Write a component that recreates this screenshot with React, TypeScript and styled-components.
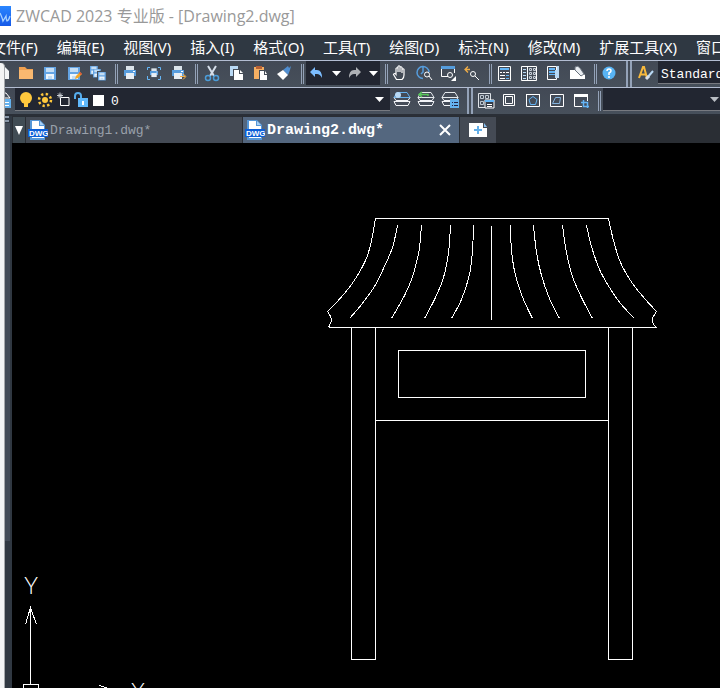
import React from "react";
import styled, { createGlobalStyle } from "styled-components";

const uiFont = '"Noto Sans", "Noto Sans CJK SC", sans-serif';
const monoFont = '"Liberation Mono", "Noto Sans CJK SC", monospace';

const GlobalStyle = createGlobalStyle`
  * { box-sizing: border-box; }
  body { margin: 0; background: #000; overflow: hidden; }
  button, select { font: inherit; color: inherit; border: 0; padding: 0; margin: 0; background: none; }
`;

const Shell = styled.div`
  position: relative;
  display: flex;
  flex-direction: column;
  min-height: 100vh;
  overflow: hidden;
  font-family: ${uiFont};
  background: #2d333c;
`;

const TitleBar = styled.header`
  display: flex;
  align-items: center;
  gap: 5px;
  height: 35px;
  padding-bottom: 3px;
  background: #fff;
  color: #999;
  white-space: nowrap;
`;

const Title = styled.h1`
  margin: 0;
  font-size: 16px;
  font-weight: 400;
  line-height: 24px;
  font-family: "Open Sans", "Noto Sans CJK SC", sans-serif;
`;

const MenuBar = styled.nav`
  display: flex;
  gap: 19px;
  height: 25px;
  margin-left: -9px;
  padding-bottom: 2px;
  background: #2f3842;
  color: #fff;
  font-size: 15px;
`;

const MenuItem = styled.button`
  flex: none;
  white-space: nowrap;
`;

const Toolbar = styled.div`
  display: flex;
  align-items: flex-start;
  height: ${(p: { $height: number }) => p.$height}px;
  border-top: 1px solid #b3bdd2;
  background: linear-gradient(#424955, #47505b);
  overflow: hidden;
`;

const PropertyBar = styled(Toolbar)`
  border-bottom: 2px solid #2a2f37;
`;

const ToolButton = styled.button<{ $clip?: number }>`
  flex: none;
  width: 24px;
  height: 24px;
  margin-left: ${(p) => -(p.$clip ?? 0)}px;
  svg { display: block; }
`;

const Divider = styled.span<{ $after?: number; $thick?: boolean }>`
  flex: none;
  align-self: ${(p) => (p.$thick ? "stretch" : "center")};
  width: ${(p) => (p.$thick ? 6 : 3)}px;
  height: ${(p) => (p.$thick ? "auto" : "20px")};
  margin-left: 5px;
  margin-right: ${(p) => p.$after ?? 0}px;
  border: solid #94a2b8;
  border-width: ${(p) => (p.$thick ? "0 2px" : "0 1px")};
`;

const History = styled.div`
  flex: none;
  display: flex;
  align-items: center;
  width: 74px;
  height: 24px;
  background: #222631;
`;

const CaretButton = styled.button`
  flex: none;
  display: flex;
  justify-content: center;
  width: 13px;
`;

const Combo = styled.label<{ $width: number }>`
  flex: none;
  display: flex;
  align-items: center;
  gap: 3px;
  width: ${(p) => p.$width}px;
  height: 23px;
  padding: 0 6px 0 3px;
  background: #222631;
  border-bottom: 1px solid #777a80;
  color: #fff;
`;

const Picker = styled.select`
  appearance: none;
  flex: 1;
  min-width: 0;
  height: 22px;
  padding-top: 4px;
  outline: none;
  font-family: ${monoFont};
  font-size: 13px;
`;

const Body = styled.div`
  flex: 1;
  display: flex;
`;

const Rail = styled.aside`
  flex: none;
  width: 12px;
  padding-left: 5px;
  background: #303842;
`;

const Grip = styled.div`
  width: 4px;
  height: 6px;
  border: solid #8997a8;
  border-width: 2px 0;
`;

const RailPanel = styled.div`
  width: 5px;
  height: 418px;
  margin-top: 1px;
  background: #424b57;
`;

const Workspace = styled.main`
  flex: 1;
  min-width: 0;
  display: flex;
  flex-direction: column;
`;

const TabStrip = styled.div`
  flex: none;
  display: flex;
  gap: 1px;
  height: 27px;
  padding: 1px 0 0 1px;
  background: #2a2e34;
`;

const TabList = styled.button`
  flex: none;
  display: flex;
  align-items: center;
  justify-content: center;
  width: 12px;
  background: #414c54;
`;

const Tab = styled.div<{ $active?: boolean }>`
  flex: none;
  display: flex;
  align-items: center;
  width: 216px;
  padding: 0 8px 0 2px;
  background: ${(p) => (p.$active ? "#54677f" : "#444a54")};
  color: ${(p) => (p.$active ? "#fff" : "#99a0aa")};
  font-family: ${monoFont};
  font-size: ${(p) => (p.$active ? 15 : 13)}px;
  font-weight: ${(p) => (p.$active ? 700 : 400)};
`;

const TabName = styled.button`
  flex: 1;
  display: flex;
  align-items: center;
  gap: 2px;
  text-align: left;
  font-weight: inherit;
`;

const IconButton = styled.button`
  flex: none;
  display: flex;
`;

const NewTab = styled.button`
  flex: none;
  display: flex;
  align-items: center;
  justify-content: center;
  width: 36px;
  background: #444a54;
`;

const Canvas = styled.div`
  flex: 1;
  display: flex;
  background: #000;
`;

const Drawing = styled.svg`
  flex: 1;
  min-width: 0;
  display: block;
  overflow: hidden;
`;

const BehindWindow = styled.div`
  position: absolute;
  left: 0;
  top: 63px;
  bottom: 0;
  width: 5px;
  background: #f3f4f5;
  border-right: 1px solid #a4a7ab;
  border-top-right-radius: 4px;
`;

const blue = "#64b5f6";
const sky = "#b9d9f5";
const wh = "#fff";

const floppy = (x: number, y: number, s: number) => (
  <g transform={`translate(${x} ${y}) scale(${s})`}>
    <path d="M0 0h12v13H0z" fill="#64a4e4" />
    <path d="M2 1h8v4H2z" fill="#c4ddf4" />
    <path d="M2 7h8v5H2z" fill="#eef5fb" />
    <path d="M4 9h4v3H4z" fill="#c4ddf4" />
  </g>
);

const printer = (
  <g>
    <path d="M8 5h8v4H8z" fill="#dbe3ea" />
    <path d="M6 9h12v6H6z" fill="#589dde" />
    <path d="M8 12h8v6H8z" fill="#e8eef4" />
    <path d="M15 10h2v1h-2z" fill={wh} />
  </g>
);

const layers = (top: string) => (
  <g fill="none" strokeWidth="1">
    <path d="M7 4.500h10l3 5H4z" stroke={top} />
    <path d="M4 9.500l2 3h12l2-3M4 13.500h16M4 13.500l2 4h12l2-4" stroke="#f1f3f6" />
  </g>
);

const art: Record<string, React.ReactNode> = {
  newFile: <path d="M8 6h7l4 4v8H8z" fill="#f3f5f7" />,
  open: (
    <g>
      <path d="M5 6h6l2 2h6v10H5z" fill="#f0a050" />
      <path d="M5 9h14v9H5z" fill="#f9b870" />
    </g>
  ),
  save: floppy(6, 6, 1),
  saveAs: (
    <g>
      {floppy(6, 6, 1)}
      <path d="M13 18l1-3 4-4 2 2-4 4z" fill="#f5a623" />
      <path d="M17 12l1-1 2 2-1 1z" fill="#d85040" />
    </g>
  ),
  saveAll: (
    <g>
      {floppy(4, 5, 0.65)}
      {floppy(7, 8, 0.65)}
      <path d="M11 10h9v10h-9z" fill="#444c57" />
      {floppy(12, 11, 0.65)}
    </g>
  ),
  print: printer,
  preview: (
    <g>
      <g transform="translate(4 4) scale(.67)">{printer}</g>
      <path d="M5.500 9V6.500H8M16 6.500h2.500V9M5.500 15v3.500H8M16 18.500h2.500V15" fill="none" stroke={blue} />
    </g>
  ),
  publish: (
    <g>
      {printer}
      <path d="M14 15.500h5M17 13l3 2.500-3 3" fill="none" stroke="#f5ae45" />
    </g>
  ),
  cut: (
    <g fill="none">
      <path d="M8 5l6 10M16 5l-6 10" stroke="#d5deea" strokeWidth="2" />
      <circle cx="8" cy="17" r="2.500" stroke="#4b9cd8" strokeWidth="1.500" />
      <circle cx="16" cy="17" r="2.500" stroke="#4b9cd8" strokeWidth="1.500" />
    </g>
  ),
  copy: (
    <g>
      <path d="M6 5h8v10H6z" fill={sky} />
      <path d="M9 8h6l4 4v8H9z" fill="#444c57" />
      <path d="M10 9h5v4h4v6h-9z" fill={wh} />
      <path d="M16 9l3 3h-3z" fill={wh} />
    </g>
  ),
  paste: (
    <g>
      <path d="M6 6h10v12H6z" fill="#f5af62" />
      <path d="M8 5h6v3H8z" fill="#b66136" />
      <path d="M11 9h8v10h-8z" fill="#444c57" />
      <path d="M12 10h4v4h3v5h-7z" fill={wh} />
      <path d="M17 10l2 3h-2z" fill={wh} />
    </g>
  ),
  match: (
    <g>
      <path d="M11 9l5-4 1 2 2-2-1 4-2 5z" fill="#508ed0" />
      <path d="M5 13l6-4 5 5-5 5z" fill={wh} />
    </g>
  ),
  undo: <path d="M4 11l5-5v3h2q5 0 5 8q-2-4-5-4H9v3z" fill="#7cbdff" />,
  redo: <path d="M18 11l-5-5v3h-2q-5 0-5 8q2-4 5-4h2v3z" fill="#aeb1b5" />,
  pan: (
    <path
      d="M8.500 18.500l-3-5q1-2 2.500 0V7.500q1-1.500 2 0V11V5.500q1-1.500 2 0V11V6.500q1-1.500 2 0V12V8.500q1.500-1.500 2 0V14q0 3-2 4.500z"
      fill="#444c57"
      stroke={wh}
      strokeWidth="1.200"
    />
  ),
  zoomRealtime: (
    <g fill="none">
      <path d="M11 17.500a6 6 0 1 1 6-6.500M11 6v5l-2 2" stroke="#559cdc" strokeWidth="1.500" />
      <circle cx="15" cy="13.500" r="2.500" stroke={wh} />
      <path d="M17 15l3 4" stroke={wh} />
    </g>
  ),
  zoomWindow: (
    <g fill="none">
      <path d="M5.500 7v8.500H12M18.500 7v5" stroke={wh} />
      <path d="M5 5h14v3H5z" fill="#559cdc" />
      <circle cx="14" cy="14" r="2.500" stroke={wh} />
      <path d="M20 15v5h-5z" fill={wh} />
    </g>
  ),
  zoomPrevious: (
    <g fill="none">
      <path d="M5 8.500h5M8 5.500l-3 3 3 3" stroke="#efad48" strokeWidth="1.300" />
      <circle cx="13" cy="13" r="2.500" stroke={wh} />
      <path d="M15 15l4 4" stroke={wh} />
    </g>
  ),
  properties: (
    <g>
      <path d="M5.500 5.500h12v14h-12z" fill="none" stroke={wh} />
      <path d="M7 7h9v2H7zM13 14h3v1h-3zM13 17h3v1h-3z" fill={blue} />
      <path d="M7 11h2v1H7zM10 11h2v1h-2zM13 11h3v1h-3zM7 14h5v1H7zM7 17h5v1H7z" fill={wh} />
    </g>
  ),
  designCenter: (
    <g fill="none" stroke={wh}>
      <path d="M4.500 5.500h15v14h-15zM10.500 5v15" />
      <path d="M6 8.500h3M6 11.500h3M6 14.500h3M6 17.500h3" stroke={sky} />
      <path d="M12.500 7.500h2v2h-2zM16.500 7.500h2v2h-2zM12.500 11.500h2v2h-2zM16.500 11.500h2v2h-2zM12.500 15.500h2v2h-2zM16.500 15.500h2v2h-2z" stroke="#c6ced8" />
    </g>
  ),
  palettes: (
    <g>
      <path d="M6.500 5.500h9v13h-9z" fill="none" stroke={wh} />
      <path d="M16 5h2v4h-2zM14 9h4v8h-4z" fill={sky} />
      <path d="M8 7h6v2H8zM8 10h6v2H8zM8 13h6v1H8z" fill={blue} />
    </g>
  ),
  eraser: (
    <g>
      <path d="M5 9h8l7 5v4H5z" fill={wh} />
      <path d="M10 6q3-2 5 1l4 6-3 2-6-6z" fill="#e9edf1" stroke="#68717c" />
    </g>
  ),
  help: (
    <g>
      <circle cx="12" cy="12" r="6.500" fill="#58b4f5" />
      <path d="M10 10q0-2 2-2t2 2q0 1-2 2v2M12 15v2" stroke={wh} fill="none" strokeWidth="1.500" />
    </g>
  ),
  textStyle: (
    <g fill="none">
      <path d="M5 17L9 6h1l3 11M6 13.500h6" stroke="#f8b93c" strokeWidth="2" />
      <path d="M13 17l6-7" stroke={sky} strokeWidth="2" />
      <path d="M12 18l3-3" stroke="#d8dfe8" strokeWidth="3" />
    </g>
  ),
  layerManager: (
    <g>
      <path d="M8 5h7l4 5H6z" fill="none" stroke={wh} />
      <path d="M10 11h10v9H10z" fill="#64b1ee" />
      <path d="M12 14.500h6M12 17.500h6" stroke={wh} />
    </g>
  ),
  layerCurrent: (
    <g>
      {layers("#65b1ef")}
      <circle cx="8" cy="7" r="3" fill="#b8d9f5" />
    </g>
  ),
  layerPrevious: (
    <g>
      {layers("#e5e9ed")}
      <path d="M14 8V6.500H5M8 4L5 6.500 8 9" fill="none" stroke="#59c85a" strokeWidth="1.500" />
    </g>
  ),
  layerStates: (
    <g>
      {layers("#e5e9ed")}
      <path d="M12 11h9v9h-9z" fill="#64b1ee" />
      <path d="M14 14.500h1M16 14.500h4M14 17.500h1M16 17.500h4" stroke="#224" />
    </g>
  ),
  viewports: (
    <g fill="none" stroke={wh}>
      <path d="M5.500 5.500h12v14h-12z" stroke="#dfe3e8" />
      <path d="M7.500 7.500h3v3h-3zM12.500 7.500h3v3h-3zM7.500 13.500h3v3h-3z" stroke="#bec7d0" />
      <path d="M12 12h9v8h-9z" fill="#343b46" stroke={wh} />
      <path d="M12 12h9v2h-9z" fill={blue} stroke="none" />
      <path d="M14 16.500h5M14 18.500h5" />
    </g>
  ),
  singleView: <path d="M6.500 6.500h11v11h-11zM8.500 8.500h7v7h-7z" fill="none" stroke={wh} />,
  polygonView: (
    <g fill="none">
      <path d="M5.500 6.500h13v12h-13z" stroke={wh} />
      <path d="M5 6h14v1H5z" fill={wh} />
      <path d="M12 8.500l4 3-1.500 5h-5L8 11.500z" stroke={blue} />
    </g>
  ),
  objectView: (
    <g fill="none">
      <path d="M5.500 6.500h13v12h-13z" stroke={wh} />
      <path d="M10.500 9.500h5l-1 6h-7z" stroke="#85b4df" />
    </g>
  ),
  clipView: (
    <g fill="none">
      <path d="M13 18.500H5.500v-11h13V13" stroke={wh} />
      <path d="M5 6h14v3H5z" fill={wh} />
      <path d="M14.500 12v6.500H20M12 14.500h6.500V20" stroke={blue} strokeWidth="1.500" />
    </g>
  ),
};

type ToolName = keyof typeof art;

function Tool({ name, label, clip }: { name: ToolName; label: string; clip?: number }) {
  return (
    <ToolButton type="button" aria-label={label} title={label} $clip={clip}>
      <svg width="24" height="24" viewBox="0 0 24 24">{art[name]}</svg>
    </ToolButton>
  );
}

function Caret({ muted }: { muted?: boolean }) {
  return (
    <svg width="9" height="5" viewBox="0 0 9 5">
      <path d="M0 0h9L4.500 5z" fill={muted ? "#babec4" : "#fff"} />
    </svg>
  );
}

function AppLogo() {
  return (
    <svg width="11" height="20" viewBox="0 0 11 20">
      <defs>
        <linearGradient id="logo" x1="0" x2="0" y1="0" y2="1">
          <stop offset="0" stopColor="#2a86ff" />
          <stop offset="1" stopColor="#1559e8" />
        </linearGradient>
      </defs>
      <path d="M0 0h11v20H0z" fill="url(#logo)" />
      <path d="M0 7q2 4 3 8l3-5q0 3 1 5 2-1 3-5" fill="none" stroke="#a9d3ff" strokeWidth="1.300" />
    </svg>
  );
}

function DwgIcon() {
  return (
    <svg width="20" height="20" viewBox="0 0 20 20">
      <path d="M2 0h10l5 5v15H2z" fill="#5596d6" />
      <path d="M4 1h7v5h5v12H4z" fill="#fff" />
      <path d="M12 1l4 4h-4z" fill="#a9d0f4" />
      <path d="M0 9h20v8H0z" fill="#0b5ed7" />
      <text x="1" y="16" fontFamily="Liberation Sans" fontWeight="700" fontSize="8" fill="#fff">DWG</text>
    </svg>
  );
}

function LayerSymbols() {
  return (
    <svg width="90" height="20" viewBox="0 0 90 20">
      <circle cx="8" cy="9" r="6" fill="#ffc83d" />
      <path d="M6 14h4v4H6z" fill="#ffc83d" />
      <circle cx="27" cy="11" r="3" fill="#ffc83d" />
      <circle cx="27" cy="11" r="6" fill="none" stroke="#ffc83d" strokeWidth="2.500" strokeDasharray="2.300 2.412" />
      <path d="M42.500 8.500H51v8h-8.500z" fill="none" stroke="#fff" />
      <path d="M39 6.500h6M42 3.500v6M40 4.500l4 4M44 4.500l-4 4" stroke="#c8ccd1" />
      <path d="M57 10V7q0-3 3-3t3 3v4" fill="none" stroke="#55acec" strokeWidth="2" />
      <path d="M60 9h10v9H60z" fill="#60b8fb" />
      <path d="M64 12h2v4h-2z" fill="#fff" />
      <path d="M75 6h11v11H75z" fill="#fff" />
    </svg>
  );
}

type Point = [number, number];

/* Smooth cubic path that passes through every given point. */
function spline(points: Point[]) {
  const at = (i: number) => points[Math.max(0, Math.min(points.length - 1, i))];
  let d = `M${points[0].join(" ")}`;
  for (let i = 0; i < points.length - 1; i++) {
    const [a, b, c, e] = [at(i - 1), at(i), at(i + 1), at(i + 2)];
    d += `C${b[0] + (c[0] - a[0]) / 6} ${b[1] + (c[1] - a[1]) / 6} ${c[0] - (e[0] - b[0]) / 6} ${c[1] - (e[1] - b[1]) / 6} ${c[0]} ${c[1]}`;
  }
  return d;
}

const roofCurves: Point[][] = [
  [[375, 218], [371, 240], [365, 260], [351, 284], [335, 303], [327, 311]],
  [[327, 311], [330, 316], [331, 320], [328, 327]],
  [[397, 225], [392, 247], [383, 268], [374, 286], [361, 304], [349, 318]],
  [[421, 225], [419, 247], [416, 262], [411, 279], [404, 295], [391, 318]],
  [[450, 225], [448, 252], [443, 277], [435, 297], [424, 318]],
  [[473, 225], [472, 250], [469, 274], [461, 299], [451, 318]],
  [[491, 225], [491, 319]],
  [[510, 225], [511, 250], [515, 275], [523, 299], [532, 318]],
  [[533, 225], [536, 252], [541, 275], [549, 298], [559, 318]],
  [[562, 225], [566, 252], [572, 276], [581, 297], [592, 318]],
  [[586, 225], [591, 246], [599, 269], [609, 287], [620, 303], [634, 318]],
  [[608, 218], [613, 240], [620, 262], [632, 283], [645, 299], [656, 311]],
  [[656, 311], [652, 318], [653, 324], [656, 327]],
];

function Gateway() {
  return (
    <Drawing role="img" aria-label="Gateway elevation">
      <g transform="translate(-11.500 -142.500)" fill="none" stroke="#fff" shapeRendering="crispEdges">
        {roofCurves.map((points) => (
          <path key={points.join()} d={spline(points)} />
        ))}
        <path d="M375 218H608M328 327H656" />
        <path d="M351 327V659H375V327M608 327V659H632V327M375 420H608" />
        <rect x="398" y="350" width="187" height="47" />
        <path d="M30 684V607M25 624L30 607L36 624M23 690V684H38V690M99 685L108 688" />
      </g>
      <g transform="translate(-12 -143)" fill="#fff" fontFamily="Lato" fontWeight="300" fontSize="23">
        <text x="31" y="594" textAnchor="middle">Y</text>
        <text x="138" y="700" textAnchor="middle">X</text>
      </g>
    </Drawing>
  );
}

const menus = ["文件(F)", "编辑(E)", "视图(V)", "插入(I)", "格式(O)", "工具(T)", "绘图(D)", "标注(N)", "修改(M)", "扩展工具(X)", "窗口(W)"];

export default function App() {
  return (
    <Shell>
      <GlobalStyle />
      <TitleBar>
        <AppLogo />
        <Title>ZWCAD 2023 专业版 - [Drawing2.dwg]</Title>
      </TitleBar>
      <MenuBar>
        {menus.map((menu) => (
          <MenuItem key={menu} type="button">{menu}</MenuItem>
        ))}
      </MenuBar>
      <Toolbar $height={27}>
        <Tool name="newFile" label="新建" clip={10} />
        <Tool name="open" label="打开" />
        <Tool name="save" label="保存" />
        <Tool name="saveAs" label="另存为" />
        <Tool name="saveAll" label="全部保存" />
        <Divider />
        <Tool name="print" label="打印" />
        <Tool name="preview" label="打印预览" />
        <Tool name="publish" label="发布" />
        <Divider $after={2} />
        <Tool name="cut" label="剪切" />
        <Tool name="copy" label="复制" />
        <Tool name="paste" label="粘贴" />
        <Tool name="match" label="特性匹配" />
        <Divider $after={2} />
        <History>
          <Tool name="undo" label="放弃" />
          <CaretButton type="button" aria-label="放弃列表"><Caret /></CaretButton>
          <Tool name="redo" label="重做" />
          <CaretButton type="button" aria-label="重做列表"><Caret /></CaretButton>
        </History>
        <Divider />
        <Tool name="pan" label="平移" />
        <Tool name="zoomRealtime" label="实时缩放" />
        <Tool name="zoomWindow" label="窗口缩放" />
        <Tool name="zoomPrevious" label="缩放上一个" />
        <Divider $after={1} />
        <Tool name="properties" label="特性" />
        <Tool name="designCenter" label="设计中心" />
        <Tool name="palettes" label="工具选项板" />
        <Tool name="eraser" label="清理" />
        <Divider />
        <Tool name="help" label="帮助" />
        <Divider $thick $after={2} />
        <Tool name="textStyle" label="文字样式" />
        <Combo $width={160}>
          <Picker aria-label="文字样式" defaultValue="Standard"><option>Standard</option></Picker>
          <Caret />
        </Combo>
      </Toolbar>
      <PropertyBar $height={29}>
        <Tool name="layerManager" label="图层特性管理器" clip={9} />
        <Combo $width={375}>
          <LayerSymbols />
          <Picker aria-label="图层" defaultValue="0"><option>0</option></Picker>
          <Caret />
        </Combo>
        <Tool name="layerCurrent" label="置为当前图层" />
        <Tool name="layerPrevious" label="上一个图层" />
        <Tool name="layerStates" label="图层状态" />
        <Divider $thick />
        <Tool name="viewports" label="视口" />
        <Tool name="singleView" label="单个视口" />
        <Tool name="polygonView" label="多边形视口" />
        <Tool name="objectView" label="对象视口" />
        <Tool name="clipView" label="裁剪视口" />
        <Divider $after={2} />
        <Combo $width={122}>
          <Picker aria-label="视口比例" defaultValue=""><option value=""></option></Picker>
          <Caret muted />
        </Combo>
      </PropertyBar>
      <Body>
        <Rail>
          <Grip />
          <RailPanel />
        </Rail>
        <Workspace>
          <TabStrip>
            <TabList type="button" aria-label="图形列表">
              <svg width="8" height="9" viewBox="0 0 8 9"><path d="M0 0h8L4 9z" fill="#fff" /></svg>
            </TabList>
            <Tab>
              <TabName type="button"><DwgIcon />Drawing1.dwg*</TabName>
            </Tab>
            <Tab $active>
              <TabName type="button"><DwgIcon />Drawing2.dwg*</TabName>
              <IconButton type="button" aria-label="关闭">
                <svg width="12" height="12" viewBox="0 0 12 12"><path d="M1 1l10 10M11 1L1 11" stroke="#fff" strokeWidth="2" /></svg>
              </IconButton>
            </Tab>
            <NewTab type="button" aria-label="新建图形">
              <svg width="18" height="14" viewBox="0 0 18 14">
                <path d="M0 0h14v5h4v9H0z" fill="#fff" />
                <path d="M15 0l3 4h-3z" fill="#86bdec" />
                <path d="M5 7h8M9 3v8" stroke="#62aee8" strokeWidth="2" />
              </svg>
            </NewTab>
          </TabStrip>
          <Canvas>
            <Gateway />
          </Canvas>
        </Workspace>
      </Body>
      <BehindWindow />
    </Shell>
  );
}
